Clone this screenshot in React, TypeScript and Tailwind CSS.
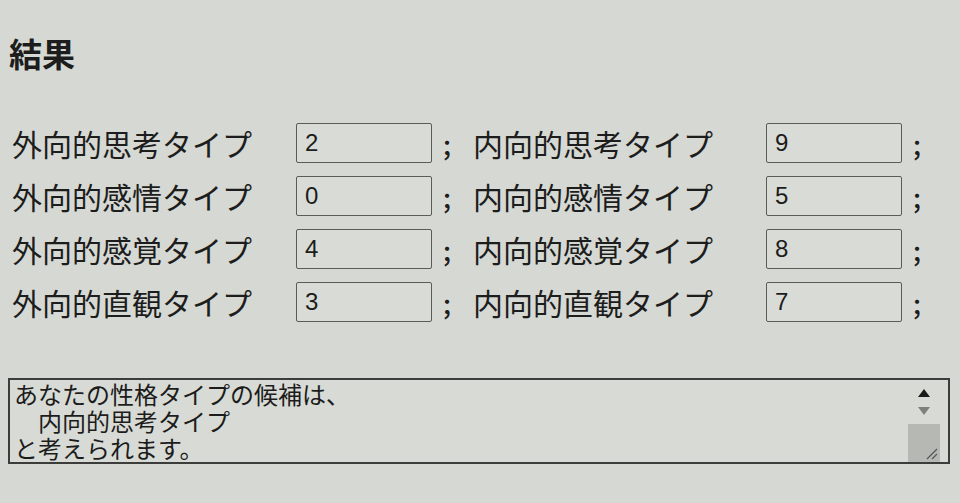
import React from "react";

const ROWS = [
  { left: "外向的思考タイプ", lv: "2", right: "内向的思考タイプ", rv: "9" },
  { left: "外向的感情タイプ", lv: "0", right: "内向的感情タイプ", rv: "5" },
  { left: "外向的感覚タイプ", lv: "4", right: "内向的感覚タイプ", rv: "8" },
  { left: "外向的直観タイプ", lv: "3", right: "内向的直観タイプ", rv: "7" },
];

const font = "font-['Noto_Sans_CJK_JP','Noto_Sans',sans-serif]";

function Box({ value }: { value: string }) {
  return (
    <div className="w-[136px] h-[40px] border border-[#5a5c58] rounded-[2px] bg-[#d9dcd6] flex items-center pl-[8px] text-[24px] text-[#1c1c1c] font-['Liberation_Sans',sans-serif]">
      {value}
    </div>
  );
}

export default function App() {
  return (
    <div className={`w-[960px] h-[503px] overflow-hidden bg-[#d6d9d3] text-[#1d1d1d] ${font}`}>
      {/* Heading */}
      <h2 className="pl-[9px] pt-[31px] text-[33px] font-bold leading-[44px]">結果</h2>

      {/* Score rows */}
      <div className="mt-[48px] pl-[12px] flex flex-col gap-[13px]">
        {ROWS.map((r) => (
          <div key={r.left} className="flex items-center h-[40px] text-[30px] leading-none">
            <span className="w-[284px] whitespace-nowrap">{r.left}</span>
            <Box value={r.lv} />
            <span className="w-[41px] pl-[11px] text-[27px] font-medium">;</span>
            <span className="w-[293px] whitespace-nowrap">{r.right}</span>
            <Box value={r.rv} />
            <span className="pl-[11px] text-[27px] font-medium">;</span>
          </div>
        ))}
      </div>

      {/* Result text area */}
      <div className="mt-[56px] ml-[8px] w-[942px] h-[86px] border-2 border-[#3c3d3a] bg-[#d8dbd5] flex">
        <div className="flex-1 pl-[4px] pt-[0px] text-[24px] leading-[27px] whitespace-pre text-[#1c1c1c]">
          {"あなたの性格タイプの候補は、\n　内向的思考タイプ\nと考えられます。"}
        </div>
        <div className="w-[32px] flex flex-col items-center mr-[8px]">
          <svg width="14" height="10" viewBox="0 0 14 10" className="mt-[8px]">
            <path d="M7 1 L13 9 L1 9 Z" fill="#1a1a1a" />
          </svg>
          <svg width="14" height="10" viewBox="0 0 14 10" className="mt-[8px]">
            <path d="M1 1 L13 1 L7 9 Z" fill="#7d807b" />
          </svg>
          <div className="mt-[8px] w-full flex-1 bg-[#b6b9b3] relative">
            <svg width="14" height="14" viewBox="0 0 14 14" className="absolute right-[2px] bottom-[2px]">
              <path d="M13 3 L3 13 M13 8 L8 13" stroke="#555" strokeWidth="1.2" />
            </svg>
          </div>
        </div>
      </div>
    </div>
  );
}
